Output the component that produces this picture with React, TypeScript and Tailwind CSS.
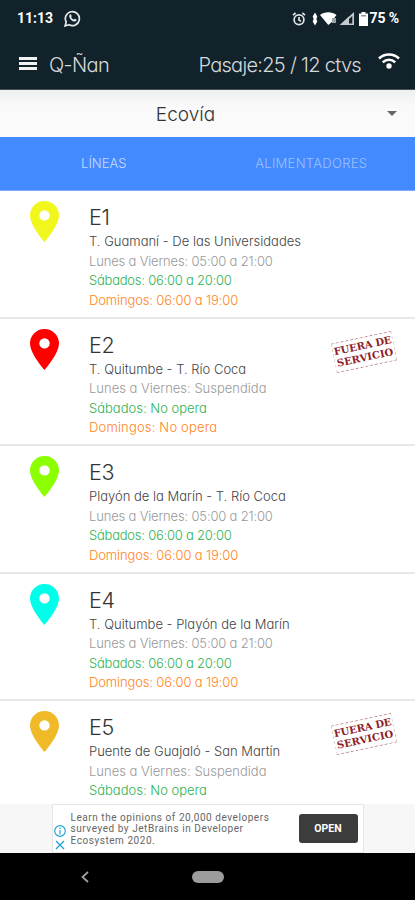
import React from "react";

interface Line {
  id: string;
  color: string;
  route: string;
  weekdays: string;
  saturday: string;
  sunday?: string;
  suspended?: boolean;
}

const lines: Line[] = [
  {
    id: "E1",
    color: "#f1f61c",
    route: "T. Guamaní - De las Universidades",
    weekdays: "05:00 a 21:00",
    saturday: "06:00 a 20:00",
    sunday: "06:00 a 19:00",
  },
  {
    id: "E2",
    color: "#ff0000",
    route: "T. Quitumbe - T. Río Coca",
    weekdays: "Suspendida",
    saturday: "No opera",
    sunday: "No opera",
    suspended: true,
  },
  {
    id: "E3",
    color: "#8cff00",
    route: "Playón de la Marín - T. Río Coca",
    weekdays: "05:00 a 21:00",
    saturday: "06:00 a 20:00",
    sunday: "06:00 a 19:00",
  },
  {
    id: "E4",
    color: "#00ffea",
    route: "T. Quitumbe - Playón de la Marín",
    weekdays: "05:00 a 21:00",
    saturday: "06:00 a 20:00",
    sunday: "06:00 a 19:00",
  },
  {
    id: "E5",
    color: "#f0b928",
    route: "Puente de Guajaló - San Martín",
    weekdays: "Suspendida",
    saturday: "No opera",
    suspended: true,
  },
];

const Pin = ({ color }: { color: string }) => (
  <svg width="29" height="41" viewBox="0 0 29 41">
    <path
      fill={color}
      fillRule="evenodd"
      d="M14.5 0C6.5 0 0 6.4 0 14.3C0 25 14.5 41 14.5 41S29 25 29 14.3C29 6.4 22.5 0 14.5 0ZM14.5 9.2a5.2 5.2 0 1 1 0 10.4a5.2 5.2 0 0 1 0-10.4Z"
    />
  </svg>
);

const Stamp = () => (
  <div className="w-[62px] h-[30px] -rotate-[12deg] border border-dashed border-y-[#a05a5e] border-x-[#d9b9bb] flex flex-col items-center justify-center font-['DejaVu_Serif',serif] font-bold text-[#8c2028] text-[10px] leading-[12px] whitespace-nowrap">
    <span className="tracking-[-0.1px]">FUERA DE</span>
    <span className="tracking-[0.1px]">SERVICIO</span>
  </div>
);

const StatusBar = () => (
  <div className="h-[37px] flex items-center justify-between pl-[17px] pr-[16px] text-white font-['Roboto',sans-serif] font-bold">
    <div className="flex items-center">
      <span className="text-[14px] w-[47px]">11:13</span>
      <svg width="17" height="17" viewBox="0 0 17 17" fill="none" stroke="#e6eaec">
        <path strokeWidth="1.7" d="M1.1 15.9l1.1-3.9A7 7 0 1 1 5 14.8Z" />
        <path
          fill="#e6eaec"
          stroke="none"
          d="M5.9 4.6c.5-.5 1-.3 1.2.1l.6 1.4c.1.3-.6 1-.5 1.2.6 1.1 1.4 1.8 2.5 2.3.3.1.9-1 1.2-.9l1.5.8c.4.3.1 1.2-.4 1.6-1.2.9-3 .3-4.8-1.2-1.9-1.700-2.800-3.700-1.300-5.300Z"
        />
      </svg>
    </div>
    <div className="flex items-center">
      <svg width="14" height="14" viewBox="0 0 14 14" fill="none" stroke="#dfe4e6" strokeWidth="1.7">
        <circle cx="7" cy="7.7" r="4.9" />
        <path d="M1 3.200l2.600-2.200M13 3.200L10.400 1M7 5v3l2 1.200" />
      </svg>
      <svg className="ml-[6px]" width="6" height="14" viewBox="0 0 6 14" fill="#fff">
        <path d="M3 .5L5.300 4.500L4.300 7L5.300 9.500L3 13.500L.7 9.500L1.700 7L.7 4.500Z" />
      </svg>
      <svg className="ml-[2px]" width="17" height="13" viewBox="0 0 17 13">
        <path fill="#fff" d="M0 3C4.500-.7 12-.7 16.500 3L13 7.500V9L8.300 13Z" />
        <path fill="#9aa3a7" d="M12 6h4v5h-4z" />
      </svg>
      <svg className="ml-[3px]" width="14" height="13" viewBox="0 0 14 13">
        <path fill="#fff" d="M0 13L9 4.500V13Z" />
        <path fill="#c3c9cc" fillRule="evenodd" d="M14 0V13H0ZM12.300 4L9 7v4.600h3.300Z" />
      </svg>
      <svg className="ml-[5px]" width="9" height="14" viewBox="0 0 9 14">
        <path fill="#fff" d="M2.500 0h4v1.500H9V14H0V1.500h2.500Z" />
        <path fill="#8d979c" d="M2 3h5v1.500H2z" />
      </svg>
      <span className="ml-[2px] text-[14px] tracking-[-0.1px]">75 %</span>
    </div>
  </div>
);

const App: React.FC = () => {
  return (
    <div className="w-[415px] h-[900px] overflow-hidden flex flex-col bg-white font-['Inter','Open_Sans',sans-serif] font-light [font-feature-settings:'cv11']">
      <header className="h-[90px] shrink-0 bg-[#12222a] border-b border-[#4b5559]">
        <StatusBar />
        <div className="h-[53px] flex items-center pl-[19px] pr-[15px] text-[#d5d9db] text-[20px]">
          <div className="w-[18px] flex flex-col gap-[2px]">
            <div className="h-[3px] bg-[#f0f2f3]" />
            <div className="h-[3px] bg-[#f0f2f3]" />
            <div className="h-[3px] bg-[#f0f2f3]" />
          </div>
          <span className="ml-[12px] pt-[2px] tracking-[-0.6px]">Q-Ñan</span>
          <span className="ml-auto pt-[2px] tracking-[-0.7px]">
            Pasaje:25 / 12 ctvs
          </span>
          <svg className="ml-[17px] -mt-[4px]" width="22" height="17" viewBox="0 0 22 17" fill="none" stroke="#fff" strokeWidth="2.5">
            <path d="M1 5.500C6.500 0 15.500 0 21 5.500M4.800 9.400C8.300 6 13.700 6 17.200 9.400" />
            <circle cx="11" cy="13" r="2.7" fill="#fff" stroke="none" />
          </svg>
        </div>
      </header>

      <div className="h-[47px] shrink-0 bg-gradient-to-b from-[#eeefef] via-[#fafafa] via-35% to-[#fafafa] flex items-center pr-[18px]">
        <span className="flex-1 pr-[16px] pt-[4px] text-center text-[19px] text-[#333]">
          Ecovía
        </span>
        <svg width="10" height="5" viewBox="0 0 10 5">
          <path fill="#666" d="M0 0h10L5 5Z" />
        </svg>
      </div>

      <nav className="h-[54px] shrink-0 bg-[#448aff] grid grid-cols-2 items-center text-center text-[13px] border-b border-[#7dadff]">
        <span className="text-[#c8dcff]">LÍNEAS</span>
        <span className="text-[#9bc1ff] tracking-[0.3px]">ALIMENTADORES</span>
      </nav>

      <main className="h-[613px] shrink-0 overflow-hidden">
        {lines.map((line) => (
          <div
            key={line.id}
            className="h-[127.5px] flex border-b-2 border-[#e8e8e8] pl-[30px] pt-[10px]"
          >
            <Pin color={line.color} />
            <div className="ml-[30px] pt-px flex-1 text-[13px] leading-[19.5px] whitespace-nowrap">
              <h2 className="text-[21.5px] leading-[31px] h-[30px] tracking-[-0.4px] text-[#333]">
                {line.id}
              </h2>
              <p className="text-[#444]">{line.route}</p>
              <p
                className={
                  line.suspended
                    ? "text-[#999]"
                    : "text-[#999] tracking-[-0.17px]"
                }
              >
                Lunes a Viernes: {line.weekdays}
              </p>
              <p
                className={
                  line.suspended
                    ? "text-[#2fb153]"
                    : "text-[#2fb153] tracking-[-0.23px]"
                }
              >
                Sábados: {line.saturday}
              </p>
              {line.sunday && (
                <p
                  className={
                    line.suspended
                      ? "text-[#ff8420] tracking-[0.17px]"
                      : "text-[#ff8420] tracking-[-0.13px]"
                  }
                >
                  Domingos: {line.sunday}
                </p>
              )}
            </div>
            {line.suspended && (
              <div className="mr-[20px] mt-[8px]">
                <Stamp />
              </div>
            )}
          </div>
        ))}
      </main>

      <div className="h-[49px] shrink-0 bg-[#f7f7f7] flex justify-center font-['Roboto',sans-serif]">
        <div className="w-[312px] bg-white border border-[#e6e6e6] flex items-center pr-[5px]">
          <div className="w-[15px] pt-[18px] flex flex-col items-center gap-[3px]">
            <svg width="12" height="12" viewBox="0 0 12 12" fill="none" stroke="#27a3d4" strokeWidth="1.2">
              <circle cx="6" cy="6" r="5.3" />
              <path d="M6 2.500v1.500M6 5v4.500" />
            </svg>
            <svg width="10" height="10" viewBox="0 0 10 10" stroke="#27a3d4" strokeWidth="1.4">
              <path d="M1 1l8 8M9 1L1 9" />
            </svg>
          </div>
          <p className="ml-[3px] pt-px flex-1 text-[10px] leading-[11.5px] font-normal text-[#666] tracking-[0.55px] whitespace-nowrap">
            Learn the opinions of 20,000 developers
            <br />
            surveyed by JetBrains in Developer
            <br />
            Ecosystem 2020.
          </p>
          <button className="w-[59px] h-[29px] rounded-[3px] bg-[#3c3c3c] text-white text-[10.5px] font-bold">
            OPEN
          </button>
        </div>
      </div>

      <footer className="h-[47px] shrink-0 bg-black flex items-center">
        <svg className="ml-[81px]" width="8" height="12" viewBox="0 0 8 12" fill="none" stroke="#a0a0a0" strokeWidth="1.8">
          <path d="M7 1L1.500 6L7 11" />
        </svg>
        <div className="ml-[103px] w-[32px] h-[12px] rounded-full bg-[#9c9c9c]" />
      </footer>
    </div>
  );
};

export default App;
